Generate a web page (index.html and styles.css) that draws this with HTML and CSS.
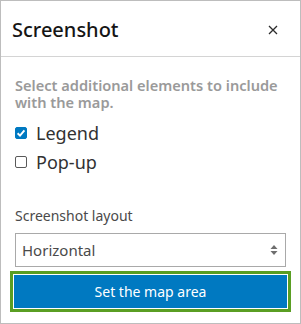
FILE: index.html
```html
<!DOCTYPE html>
<html lang="en">
<head>
    <meta charset="UTF-8">
    <meta name="viewport" content="width=device-width, initial-scale=1.0">
    <title>Screenshot</title>
    <link rel="stylesheet" href="styles.css">
</head>
<body>
    <div class="panel">
        <div class="panel-header">
            <h2 class="panel-title">Screenshot</h2>
            <button class="close-btn" aria-label="Close">
                <svg width="10" height="10" viewBox="0 0 10 10">
                    <path d="M1 1L9 9M9 1L1 9" stroke="#2b2b2b" stroke-width="1.3" fill="none"/>
                </svg>
            </button>
        </div>
        <div class="panel-body">
            <p class="hint">Select additional elements to include with the map.</p>
            <label class="check-row">
                <span class="check-box checked">
                    <svg width="12" height="12" viewBox="0 0 12 12">
                        <path d="M2.6 6.3L5 8.6L9.4 3.4" stroke="#fff" stroke-width="1.9" fill="none"/>
                    </svg>
                </span>
                Legend
            </label>
            <label class="check-row">
                <span class="check-box"></span>
                Pop-up
            </label>
            <div class="field">
                <span class="field-label">Screenshot layout</span>
                <div class="select">
                    <span>Horizontal</span>
                    <svg class="select-arrows" width="8" height="12" viewBox="0 0 8 12">
                        <path d="M4 1L7.5 5H0.5Z M4 11L7.5 7H0.5Z" fill="#6e6e6e"/>
                    </svg>
                </div>
            </div>
            <div class="action-focus">
                <button class="action-btn">Set the map area</button>
            </div>
        </div>
    </div>
</body>
</html>
```

FILE: styles.css
```css
* {
    box-sizing: border-box;
}
body {
    margin: 0;
    background-color: #fff;
    font-family: "Noto Sans", "Open Sans", sans-serif;
}
.panel {
    width: 301px;
    height: 324px;
    border: 1px solid #bdbdbd;
    display: flex;
    flex-direction: column;
}
.panel-header {
    height: 56px;
    border-bottom: 1px solid #d4d4d4;
    display: flex;
    align-items: center;
    justify-content: space-between;
    padding: 0 22px 0 11px;
}
.panel-title {
    margin: 0;
    font-size: 20px;
    font-weight: 500;
    color: #151515;
    padding-top: 2px;
}
.close-btn {
    background: none;
    border: none;
    padding: 0;
    display: flex;
    cursor: pointer;
    margin-top: 3px;
}
.panel-body {
    padding: 20px 14px 0 14px;
    display: flex;
    flex-direction: column;
}
.hint {
    margin: 0 0 7px 0;
    font-size: 14.6px;
    font-weight: 600;
    line-height: 17px;
    color: #9a9a9a;
}
.check-row {
    display: flex;
    align-items: center;
    gap: 9px;
    font-size: 18px;
    color: #323232;
    height: 29px;
}
.check-box {
    width: 12px;
    height: 12px;
    border: 1px solid #595959;
    border-radius: 2px;
    display: flex;
}
.check-box.checked {
    background-color: #0079c1;
    border-color: #0079c1;
}
.check-box.checked svg {
    margin: -1px;
}
.field {
    margin-top: 31px;
    display: flex;
    flex-direction: column;
}
.field-label {
    font-size: 14px;
    color: #4a4a4a;
    line-height: 18px;
    margin-bottom: 8px;
}
.select {
    height: 34px;
    border: 1px solid #a9a9a9;
    display: flex;
    align-items: center;
    justify-content: space-between;
    padding: 0 7px 0 6px;
    font-size: 15px;
    color: #4a4a4a;
}
.action-focus {
    margin: 4px -5px 0 -5px;
    border: 3px solid #5a9e23;
    padding: 1px;
}
.action-btn {
    width: 100%;
    height: 33px;
    border: none;
    background-color: #0079c1;
    color: #fff;
    font-family: inherit;
    font-size: 14px;
    cursor: pointer;
}
```
